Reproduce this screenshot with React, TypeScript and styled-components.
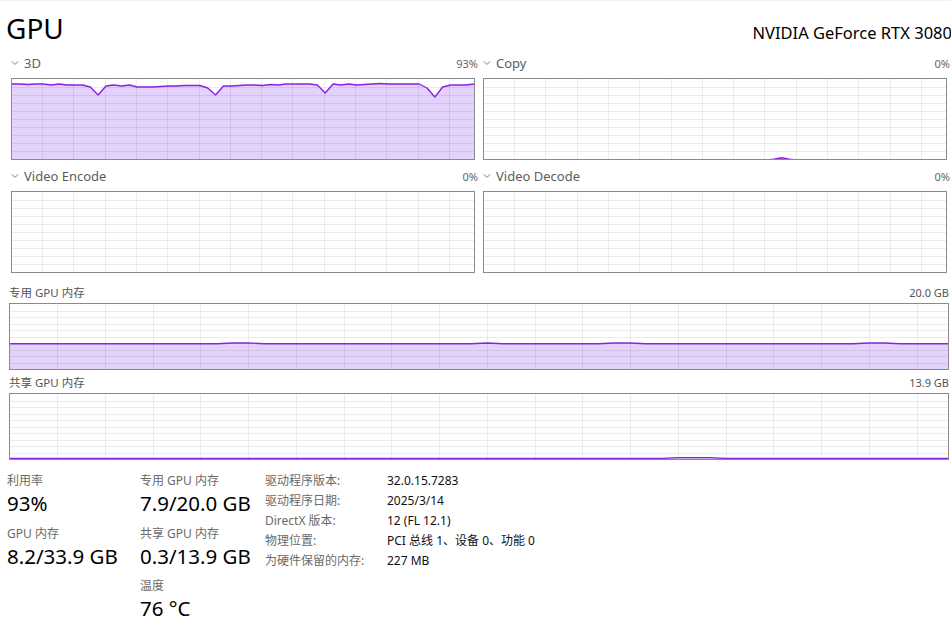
import React from "react";
import styled, { createGlobalStyle } from "styled-components";

const Global = createGlobalStyle`
  html, body { margin: 0; padding: 0; background: #ffffff; }
  body {
    font-family: "Segoe UI", "Noto Sans", "Noto Sans CJK SC", sans-serif;
    color: #1a1a1a;
    -webkit-font-smoothing: antialiased;
  }
`;

const Page = styled.div`
  width: 951px;
  height: 629px;
  box-sizing: border-box;
  border-top: 1px solid #f1f1f3;
  overflow: hidden;
`;

const Header = styled.div`
  display: flex;
  justify-content: space-between;
  align-items: baseline;
  padding: 9px 0 0 6px;
  height: 45px;
  box-sizing: border-box;
`;

const Title = styled.div`
  font-size: 28px;
  line-height: 36px;
  font-weight: 400;
  color: #000;
`;

const DeviceName = styled.div`
  font-size: 16.5px;
  line-height: 22px;
  color: #000;
  white-space: nowrap;
  margin-right: -1px;
`;

const EngineGrid = styled.div`
  display: grid;
  grid-template-columns: 464px 464px;
  column-gap: 8px;
  row-gap: 8px;
  margin: 9px 0 0 11px;
`;

const Cell = styled.div`
  display: flex;
  flex-direction: column;
`;

const LabelRow = styled.div<{ $h: number; $gap: number; $over?: number }>`
  display: flex;
  align-items: center;
  justify-content: space-between;
  height: ${(p) => p.$h}px;
  margin-bottom: ${(p) => p.$gap}px;
  margin-right: ${(p) => -(p.$over ?? 0)}px;
`;

const EngineName = styled.span`
  display: flex;
  align-items: center;
  gap: 5px;
  font-size: 13px;
  color: #5c5c5c;
`;

const Percent = styled.span`
  font-size: 11px;
  color: #666;
`;

const MemLabel = styled.span`
  font-size: 11.5px;
  color: #555;
`;

const MemValue = styled.span`
  font-size: 11px;
  color: #555;
`;

const Frame = styled.div<{ $h: number }>`
  height: ${(p) => p.$h}px;
  border: 1px solid #8a8a8a;
  box-sizing: border-box;
  background: #fff;
  svg { display: block; }
`;

const MemSection = styled.div<{ $top: number }>`
  margin: ${(p) => p.$top}px 0 0 9px;
  width: 940px;
`;

const Stats = styled.div`
  display: flex;
  margin-top: 13px;
  padding-left: 7px;
`;

const StatCol = styled.div<{ $w: number }>`
  width: ${(p) => p.$w}px;
  display: flex;
  flex-direction: column;
`;

const StatBlock = styled.div`
  margin-bottom: 8.5px;
`;

const StatLabel = styled.div`
  font-size: 12px;
  line-height: 16px;
  color: #6a6a6a;
`;

const StatValue = styled.div`
  font-size: 20.5px;
  line-height: 28px;
  color: #000;
  white-space: nowrap;
`;

const InfoGrid = styled.div`
  display: grid;
  grid-template-columns: 122px auto;
  grid-auto-rows: 20px;
  align-items: center;
  margin-top: -3px;
`;

const InfoKey = styled.div`
  font-size: 12px;
  color: #6a6a6a;
  white-space: nowrap;
`;

const InfoVal = styled.div`
  font-size: 12px;
  color: #111;
  white-space: nowrap;
`;

const Chevron = () => (
  <svg width="8" height="6" viewBox="0 0 8 6">
    <path d="M0.8 1.4 L4 4.4 L7.2 1.4" fill="none" stroke="#777" strokeWidth="0.9" />
  </svg>
);

type ChartProps = {
  w: number;
  h: number;
  colStep: number;
  colOffset: number;
  rows: number;
  offsets?: number[];
  fill?: boolean;
};

const LINE = "#8a22e0";
const FILL = "#e3d2fb";
const GRID = "rgba(0,0,0,0.075)";

const Chart: React.FC<ChartProps> = ({ w, h, colStep, colOffset, rows, offsets, fill = true }) => {
  const iw = w - 2;
  const ih = h - 2;
  const vLines: number[] = [];
  for (let x = colOffset; x < iw; x += colStep) vLines.push(Math.round(x) + 0.5);
  const hLines: number[] = [];
  for (let k = 1; k < rows; k++) hLines.push(Math.round((ih * k) / rows) + 0.5);
  let pts = "";
  let poly = "";
  if (offsets) {
    const n = offsets.length;
    const arr = offsets.map((o, i) => `${((iw * i) / (n - 1)).toFixed(2)},${o}`);
    pts = arr.join(" ");
    poly = `0,${ih} ${pts} ${iw},${ih}`;
  }
  return (
    <Frame $h={h}>
      <svg width={iw} height={ih} viewBox={`0 0 ${iw} ${ih}`}>
        {offsets && fill && <polygon points={poly} fill={FILL} />}
        {vLines.map((x) => (
          <line key={"v" + x} x1={x} y1={0} x2={x} y2={ih} stroke={GRID} strokeWidth={1} />
        ))}
        {hLines.map((y) => (
          <line key={"h" + y} x1={0} y1={y} x2={iw} y2={y} stroke={GRID} strokeWidth={1} />
        ))}
        {offsets && (
          <polyline points={pts} fill="none" stroke={LINE} strokeWidth={1.4} strokeLinejoin="round" />
        )}
      </svg>
    </Frame>
  );
};

const d3 = [
  5, 5, 5.5, 5, 5, 6, 5, 6, 6, 6, 8, 16, 7, 6, 7, 6, 8, 8, 8, 7.5,
  7, 7, 6.5, 6.5, 6.5, 9, 16, 7, 7, 6.5, 6, 6, 6.5, 5.5, 6, 5, 5, 5, 5, 6,
  14, 5, 6, 5, 6, 5.5, 5, 4.5, 5, 5, 5, 5, 5, 9, 18, 8, 6, 6, 6, 5,
];

const copyData = Array.from({ length: 60 }, (_, i) => (i === 38 ? 78.8 : i === 37 || i === 39 ? 80.2 : 81));

const dedicated = Array.from({ length: 60 }, (_, i) =>
  [14, 15, 30, 38, 39, 54, 55].includes(i) ? 39 : 39.8
);

const shared = Array.from({ length: 60 }, (_, i) => (i >= 42 && i <= 44 ? 63.6 : 64.4));

const engines = [
  { name: "3D", pct: "93%", data: d3 },
  { name: "Copy", pct: "0%", data: copyData },
  { name: "Video Encode", pct: "0%" },
  { name: "Video Decode", pct: "0%" },
];

export default function App() {
  return (
    <>
      <Global />
      <Page>
        <Header>
          <Title>GPU</Title>
          <DeviceName>NVIDIA GeForce RTX 3080</DeviceName>
        </Header>

        <EngineGrid>
          {engines.map((e) => (
            <Cell key={e.name}>
              <LabelRow $h={16} $gap={7} $over={3}>
                <EngineName>
                  <Chevron />
                  {e.name}
                </EngineName>
                <Percent>{e.pct}</Percent>
              </LabelRow>
              <Chart w={464} h={82} colStep={31.3} colOffset={30} rows={10} offsets={e.data} />
            </Cell>
          ))}
        </EngineGrid>

        <MemSection $top={12}>
          <LabelRow $h={14} $gap={4}>
            <MemLabel>专用 GPU 内存</MemLabel>
            <MemValue>20.0 GB</MemValue>
          </LabelRow>
          <Chart w={940} h={67} colStep={47.75} colOffset={47} rows={10} offsets={dedicated} />
        </MemSection>

        <MemSection $top={5}>
          <LabelRow $h={14} $gap={4}>
            <MemLabel>共享 GPU 内存</MemLabel>
            <MemValue>13.9 GB</MemValue>
          </LabelRow>
          <Chart w={940} h={67} colStep={47.75} colOffset={47} rows={10} offsets={shared} />
        </MemSection>

        <Stats>
          <StatCol $w={133}>
            <StatBlock>
              <StatLabel>利用率</StatLabel>
              <StatValue>93%</StatValue>
            </StatBlock>
            <StatBlock>
              <StatLabel>GPU 内存</StatLabel>
              <StatValue>8.2/33.9 GB</StatValue>
            </StatBlock>
          </StatCol>
          <StatCol $w={125}>
            <StatBlock>
              <StatLabel>专用 GPU 内存</StatLabel>
              <StatValue>7.9/20.0 GB</StatValue>
            </StatBlock>
            <StatBlock>
              <StatLabel>共享 GPU 内存</StatLabel>
              <StatValue>0.3/13.9 GB</StatValue>
            </StatBlock>
            <StatBlock>
              <StatLabel>温度</StatLabel>
              <StatValue>76 °C</StatValue>
            </StatBlock>
          </StatCol>
          <InfoGrid>
            <InfoKey>驱动程序版本:</InfoKey>
            <InfoVal>32.0.15.7283</InfoVal>
            <InfoKey>驱动程序日期:</InfoKey>
            <InfoVal>2025/3/14</InfoVal>
            <InfoKey>DirectX 版本:</InfoKey>
            <InfoVal>12 (FL 12.1)</InfoVal>
            <InfoKey>物理位置:</InfoKey>
            <InfoVal>PCI 总线 1、设备 0、功能 0</InfoVal>
            <InfoKey>为硬件保留的内存:</InfoKey>
            <InfoVal>227 MB</InfoVal>
          </InfoGrid>
        </Stats>
      </Page>
    </>
  );
}
